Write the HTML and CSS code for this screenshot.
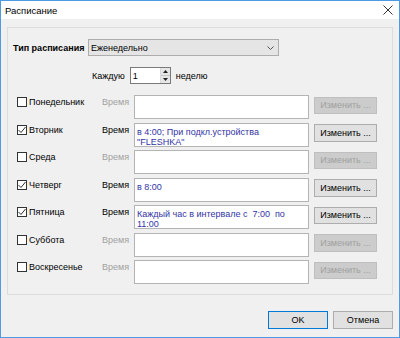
FILE: index.html
```html
<!DOCTYPE html>
<html>
<head>
<meta charset="utf-8">
<link rel="stylesheet" href="styles.css">
</head>
<body>
<div class="window">
  <div class="titlebar">
    <span class="title">Расписание</span>
    <svg class="close" width="10" height="10" viewBox="0 0 10 10"><path d="M0.5 0.5 L9.5 9.5 M9.5 0.5 L0.5 9.5" stroke="#333" stroke-width="1" fill="none"/></svg>
  </div>
  <div class="content">
    <div class="group">
      <div class="type-row">
        <span class="type-label">Тип расписания</span>
        <div class="combo">
          <span>Еженедельно</span>
          <svg class="chev" width="7" height="4" viewBox="0 0 7 4"><path d="M0.5 0.5 L3.5 3.5 L6.5 0.5" stroke="#555" stroke-width="1" fill="none"/></svg>
        </div>
      </div>
      <div class="every-row">
        <span>Каждую</span>
        <div class="spin">
          <span class="spin-val">1</span>
          <div class="spin-btns">
            <div class="spin-btn"><svg width="5" height="3" viewBox="0 0 5 3"><path d="M0 3 L2.5 0 L5 3 Z" fill="#222"/></svg></div>
            <div class="spin-btn"><svg width="5" height="3" viewBox="0 0 5 3"><path d="M0 0 L2.5 3 L5 0 Z" fill="#222"/></svg></div>
          </div>
        </div>
        <span>неделю</span>
      </div>
      <div class="days">
        <div class="row off">
          <div class="day"><span class="cb"></span><span>Понедельник</span></div>
          <span class="time">Время</span>
          <div class="tbox"></div>
          <div class="btn edit">Изменить ...</div>
        </div>
        <div class="row">
          <div class="day"><span class="cb"><svg width="8" height="8" viewBox="0 0 8 8"><path d="M0.5 4 L3 6.5 L7.5 1" stroke="#333" stroke-width="1" fill="none"/></svg></span><span>Вторник</span></div>
          <span class="time">Время</span>
          <div class="tbox">в 4:00; При подкл.устройства<br>"FLESHKA"</div>
          <div class="btn edit">Изменить ...</div>
        </div>
        <div class="row off">
          <div class="day"><span class="cb"></span><span>Среда</span></div>
          <span class="time">Время</span>
          <div class="tbox"></div>
          <div class="btn edit">Изменить ...</div>
        </div>
        <div class="row">
          <div class="day"><span class="cb"><svg width="8" height="8" viewBox="0 0 8 8"><path d="M0.5 4 L3 6.5 L7.5 1" stroke="#333" stroke-width="1" fill="none"/></svg></span><span>Четверг</span></div>
          <span class="time">Время</span>
          <div class="tbox">в 8:00</div>
          <div class="btn edit">Изменить ...</div>
        </div>
        <div class="row">
          <div class="day"><span class="cb"><svg width="8" height="8" viewBox="0 0 8 8"><path d="M0.5 4 L3 6.5 L7.5 1" stroke="#333" stroke-width="1" fill="none"/></svg></span><span>Пятница</span></div>
          <span class="time">Время</span>
          <div class="tbox">Каждый час в интервале с  7:00  по<br>11:00</div>
          <div class="btn edit">Изменить ...</div>
        </div>
        <div class="row off">
          <div class="day"><span class="cb"></span><span>Суббота</span></div>
          <span class="time">Время</span>
          <div class="tbox"></div>
          <div class="btn edit">Изменить ...</div>
        </div>
        <div class="row off">
          <div class="day"><span class="cb"></span><span>Воскресенье</span></div>
          <span class="time">Время</span>
          <div class="tbox"></div>
          <div class="btn edit">Изменить ...</div>
        </div>
      </div>
    </div>
    <div class="footer">
      <div class="btn ok">OK</div>
      <div class="btn">Отмена</div>
    </div>
  </div>
</div>
</body>
</html>
```
FILE: styles.css
```css
* { box-sizing: border-box; }
html, body { margin: 0; padding: 0; }
body {
  font-family: "Liberation Sans", Arial, sans-serif;
  font-size: 9px;
  color: #000;
  background: #f0f0f0;
}
.window {
  width: 400px;
  height: 338px;
  border: 1px solid #4d9be3;
  background: #f0f0f0;
  display: flex;
  flex-direction: column;
}
.titlebar {
  height: 18px;
  background: #fff;
  display: flex;
  align-items: center;
  justify-content: space-between;
  padding: 0 6px 0 4px;
}
.title { font-size: 9.5px; color: #000; }
.close { display: block; margin-top: 0px; }
.content {
  flex: 1;
  display: flex;
  flex-direction: column;
  padding: 8px 6px 0 6px;
}
.group {
  border: 1px solid #dcdcdc;
  padding: 11px 0 10px 0;
}
.type-row {
  display: flex;
  align-items: center;
  height: 17px;
  padding-left: 5px;
}
.type-label {
  font-weight: bold;
  width: 75px;
}
.combo {
  width: 191px;
  height: 17px;
  border: 1px solid #adadad;
  background: #e5e5e5;
  display: flex;
  align-items: center;
  justify-content: space-between;
  padding: 0 4px 0 2px;
}
.chev { display: block; }
.every-row {
  display: flex;
  align-items: center;
  height: 17px;
  margin-top: 11px;
  padding-left: 84px;
  gap: 5px;
}
.spin {
  width: 41px;
  height: 17px;
  border: 1px solid #7a7a7a;
  background: #fff;
  display: flex;
  align-items: center;
  justify-content: space-between;
  padding-left: 2px;
}
.spin-btns {
  width: 10px;
  height: 15px;
  display: flex;
  flex-direction: column;
  border-left: 1px solid #dadada;
}
.spin-btn {
  flex: 1;
  display: flex;
  align-items: center;
  justify-content: center;
  background: #e6e6e6;
}
.spin-btn + .spin-btn { border-top: 1px solid #c8c8c8; }
.spin-btn svg { display: block; }
.days {
  margin-top: 11px;
  display: flex;
  flex-direction: column;
  gap: 3.5px;
  padding-left: 9px;
}
.row {
  display: grid;
  grid-template-columns: 85px 32px 175px 63px;
  column-gap: 0;
  height: 24px;
  align-items: start;
}
.day {
  display: flex;
  align-items: center;
  gap: 2px;
  height: 14px;
}
.cb {
  width: 10px;
  height: 10px;
  border: 1px solid #333;
  background: #fff;
  display: flex;
  align-items: center;
  justify-content: center;
}
.cb svg { display: block; }
.time {
  height: 14px;
  line-height: 14px;
}
.row.off .time { color: #a0a0a0; }
.tbox {
  height: 24px;
  border: 1px solid #b4b4b4;
  background: #fff;
  color: #3434a4;
  white-space: pre-wrap;
  line-height: 10px;
  padding: 3px 2px 0 2px;
}
.btn {
  height: 18px;
  border: 1px solid #adadad;
  background: #e1e1e1;
  display: flex;
  align-items: center;
  justify-content: center;
  color: #000;
}
.edit {
  margin-left: 5px;
  margin-top: 1.5px;
  width: 63px;
  height: 17.5px;
}
.row.off .edit {
  background: #cccccc;
  border-color: #bfbfbf;
  color: #a0a0a0;
}
.footer {
  display: flex;
  justify-content: flex-end;
  gap: 5px;
  margin-top: 16px;
  padding-right: 0;
}
.footer .btn { width: 60px; }
.ok { border-color: #0078d7; }
```
